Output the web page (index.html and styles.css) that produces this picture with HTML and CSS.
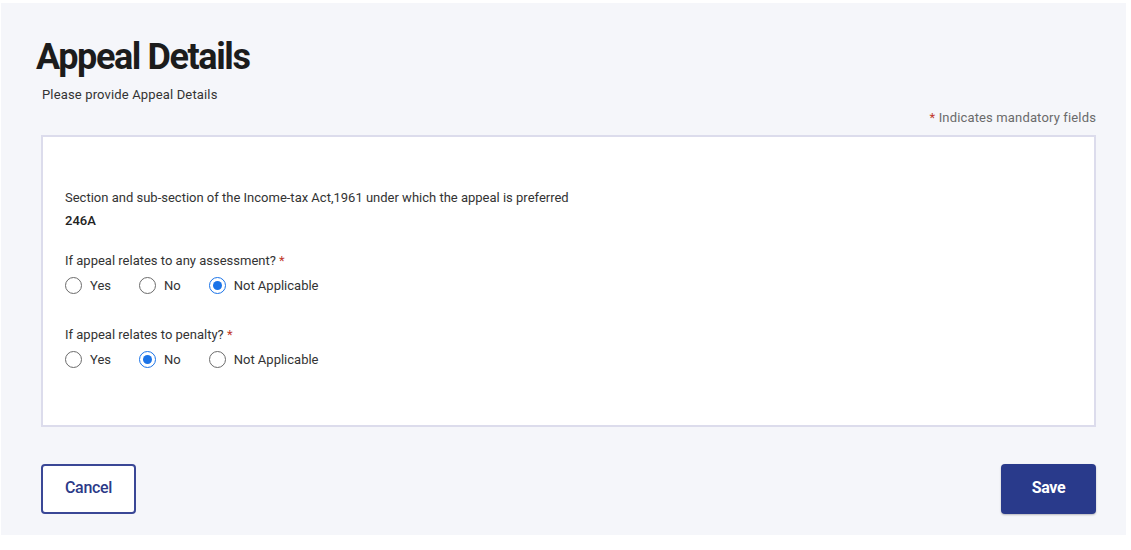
FILE: index.html
```html
<!DOCTYPE html>
<html lang="en">
<head>
<meta charset="utf-8">
<title>Appeal Details</title>
<link rel="stylesheet" href="styles.css">
</head>
<body>
<main class="panel">
  <h1 class="title">Appeal Details</h1>
  <p class="subtitle">Please provide Appeal Details</p>
  <p class="mandatory"><span class="req">*</span> Indicates mandatory fields</p>
  <section class="card">
    <div class="field">
      <div class="label">Section and sub-section of the Income-tax Act,1961 under which the appeal is preferred</div>
      <div class="value">246A</div>
    </div>
    <div class="field field-radio">
      <div class="label">If appeal relates to any assessment? <span class="req">*</span></div>
      <div class="radios">
        <label class="radio"><input type="radio" name="assess"><span>Yes</span></label>
        <label class="radio"><input type="radio" name="assess"><span>No</span></label>
        <label class="radio"><input type="radio" name="assess" checked><span>Not Applicable</span></label>
      </div>
    </div>
    <div class="field field-radio">
      <div class="label">If appeal relates to penalty? <span class="req">*</span></div>
      <div class="radios">
        <label class="radio"><input type="radio" name="penalty"><span>Yes</span></label>
        <label class="radio"><input type="radio" name="penalty" checked><span>No</span></label>
        <label class="radio"><input type="radio" name="penalty"><span>Not Applicable</span></label>
      </div>
    </div>
  </section>
  <div class="actions">
    <button class="btn btn-outline" type="button">Cancel</button>
    <button class="btn btn-primary" type="button">Save</button>
  </div>
</main>
</body>
</html>
```

FILE: styles.css
```css
* { box-sizing: border-box; }
html, body { margin: 0; background: #ffffff; }
body {
  padding: 3px 5px 15px 1px;
  font-family: Roboto, "Liberation Sans", Arial, sans-serif;
  color: #333;
}
.panel {
  background: #f5f6fa;
  height: 532px;
  padding: 32px 30px 0 40px;
}
.title {
  margin: 0 0 0 -5px;
  font-size: 36px;
  line-height: 44px;
  font-weight: 700;
  letter-spacing: -1.4px;
  color: #1c1c1c;
}
.subtitle {
  margin: 8px 0 0 1px;
  font-size: 13px;
  line-height: 16px;
  color: #333;
  letter-spacing: 0.15px;
}
.mandatory {
  margin: 7px 0 0;
  text-align: right;
  font-size: 13px;
  line-height: 16px;
  color: #6a6a6a;
  letter-spacing: 0.15px;
}
.req { color: #c0392b; }
.card {
  margin-top: 9px;
  background: #ffffff;
  border: 2px solid #dcdcec;
  height: 292px;
  padding: 53px 22px 0 22px;
}
.field { margin-bottom: 24px; }
.field-radio { margin-bottom: 30px; }
.label {
  font-size: 13px;
  line-height: 16px;
  color: #333;
  letter-spacing: 0;
}
.value {
  margin-top: 7px;
  font-size: 13px;
  line-height: 16px;
  font-weight: 500;
  color: #222;
}
.radios {
  display: flex;
  margin-top: 4px;
  height: 24px;
  align-items: center;
}
.radio {
  display: inline-flex;
  align-items: center;
  font-size: 13px;
  color: #333;
  letter-spacing: 0;
  margin-right: 28px;
}
.radio input {
  appearance: none;
  -webkit-appearance: none;
  width: 17px;
  height: 17px;
  margin: 0 8px 0 0;
  border: 1.5px solid #6b6b6b;
  border-radius: 50%;
  background: #fff;
  display: inline-grid;
  place-items: center;
}
.radio input:checked {
  border-color: #1a73e8;
}
.radio input:checked::after {
  content: "";
  width: 9px;
  height: 9px;
  border-radius: 50%;
  background: #1a73e8;
}
.actions {
  display: flex;
  justify-content: space-between;
  margin-top: 37px;
}
.btn {
  width: 95px;
  height: 50px;
  padding: 0 0 3px;
  border-radius: 4px;
  font-family: Roboto, "Liberation Sans", Arial, sans-serif;
  font-size: 16px;
  letter-spacing: -0.3px;
  cursor: pointer;
}
.btn-outline {
  background: #fff;
  border: 2px solid #3a4796;
  color: #2c3a88;
  font-weight: 500;
}
.btn-primary {
  background: #293a8b;
  border: none;
  color: #fff;
  font-weight: 700;
  box-shadow: 0 1px 2px rgba(0,0,0,0.25);
}
```
